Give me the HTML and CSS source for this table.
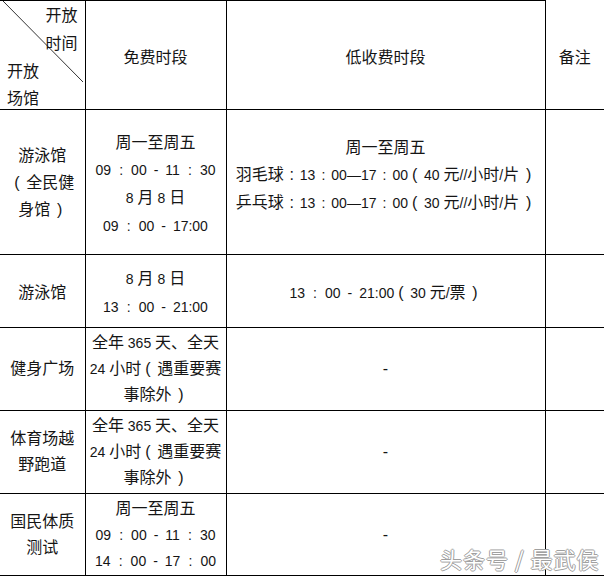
FILE: index.html
```html
<!DOCTYPE html>
<html lang="zh-CN">
<head>
<meta charset="utf-8">
<title>开放时段</title>
<link rel="stylesheet" href="styles.css">
</head>
<body>
<div class="page">
  <table class="sched">
    <colgroup><col class="c1"><col class="c2"><col class="c3"><col class="c4"></colgroup>
    <tr class="h-head">
      <td class="corner">
        <svg class="diag" width="85" height="109" viewBox="0 0 85 109"><line x1="3" y1="0" x2="83" y2="81" stroke="#333" stroke-width="1"/></svg>
        <div class="corner-top">开放<br>时间</div>
        <div class="corner-bot">开放<br>场馆</div>
      </td>
      <td class="lo">免费时段</td>
      <td class="lo">低收费时段</td>
      <td class="lo note-head">备注</td>
    </tr>
    <tr class="h-r1">
      <td>游泳馆<br><span class="po">(</span>全民健<br>身馆<span class="pc">)</span></td>
      <td class="lo">周一至周五<br><span class="d">09<span class="c cw">:</span>00&ensp;-&ensp;11<span class="c cw">:</span>30</span><br><span class="d">8 </span>月<span class="d"> 8 </span>日<br><span class="d">09<span class="c cw">:</span>00&ensp;-&ensp;17:00</span></td>
      <td class="low">周一至周五<br>羽毛球<span class="c">:</span><span class="d">13<span class="c">:</span>00—17<span class="c">:</span>00</span><span class="po">(</span><span class="d">40 </span>元<span class="d">//</span>小时<span class="d">/</span>片<span class="pc">)</span><br>乒乓球<span class="c">:</span><span class="d">13<span class="c">:</span>00—17<span class="c">:</span>00</span><span class="po">(</span><span class="d">30 </span>元<span class="d">//</span>小时<span class="d">/</span>片<span class="pc">)</span></td>
      <td></td>
    </tr>
    <tr class="h-r2 lo-row">
      <td>游泳馆</td>
      <td><span class="d">8 </span>月<span class="d"> 8 </span>日<br><span class="d">13<span class="c cw">:</span>00&ensp;-&ensp;21:00</span></td>
      <td><span class="d">13<span class="c cw">:</span>00&ensp;-&ensp;21:00</span><span class="po">(</span><span class="d">30 </span>元<span class="d">/</span>票<span class="pc">)</span></td>
      <td></td>
    </tr>
    <tr class="h-r3 tight">
      <td>健身广场</td>
      <td>全年<span class="d"> 365 </span>天、全天<br><span class="d">24 </span>小时<span class="po">(</span>遇重要赛<br>事除外<span class="pc">)</span></td>
      <td>-</td>
      <td></td>
    </tr>
    <tr class="h-r4 tight">
      <td>体育场越<br>野跑道</td>
      <td>全年<span class="d"> 365 </span>天、全天<br><span class="d">24 </span>小时<span class="po">(</span>遇重要赛<br>事除外<span class="pc">)</span></td>
      <td>-</td>
      <td></td>
    </tr>
    <tr class="h-r5 tight">
      <td>国民体质<br>测试</td>
      <td>周一至周五<br><span class="d">09<span class="c cw">:</span>00&ensp;-&ensp;11<span class="c cw">:</span>30</span><br><span class="d">14<span class="c cw">:</span>00&ensp;-&ensp;17<span class="c cw">:</span>00</span></td>
      <td>-</td>
      <td></td>
    </tr>
  </table>
  <div class="watermark">头条号 / 最武侯</div>
</div>
</body>
</html>
```
FILE: styles.css
```css
html, body {
  margin: 0;
  padding: 0;
  background: #fff;
}

body {
  font-family: "Liberation Sans", "Noto Sans CJK SC", sans-serif;
  font-size: 16px;
  color: #151515;
}

.page {
  position: relative;
  width: 604px;
  height: 577px;
  overflow: hidden;
}

.sched {
  border-collapse: collapse;
  table-layout: fixed;
  width: 604px;
}

.c1 { width: 85px; }
.c2 { width: 141px; }
.c3 { width: 319px; }
.c4 { width: 59px; }

.sched td {
  border: 1px solid #000;
  padding: 0;
  text-align: center;
  vertical-align: middle;
  line-height: 27px;
  white-space: nowrap;
}

.sched td:first-child { border-left: none; }
.sched td:last-child { border-right: none; }
.sched .note-head { border-top: none; }

.h-head { height: 109px; }
.h-r1 { height: 145px; }
.h-r2 { height: 73px; }
.h-r3 { height: 83px; }
.h-r4 { height: 83px; }
.h-r5 { height: 82px; }

.tight td { line-height: 26px; }

.sched .lo { padding-top: 5px; }
.lo-row td { padding-top: 3px; }

.d { font-size: 14px; }

.c {
  display: inline-block;
  width: 16px;
  text-align: center;
}

.cw { width: 20px; }

.po, .pc {
  display: inline-block;
  width: 12px;
}

.po { text-align: left; padding-left: 4px; }
.pc { text-align: right; padding-right: 4px; }

.sched .low { padding-bottom: 14px; }

.corner {
  position: relative;
}

.diag {
  position: absolute;
  left: 0;
  top: 0;
}

.corner-top {
  position: absolute;
  top: 1px;
  right: 7px;
  line-height: 28px;
}

.corner-bot {
  position: absolute;
  top: 57px;
  left: 7px;
  line-height: 27px;
}

.watermark {
  position: absolute;
  left: 440px;
  top: 545px;
  font-family: "Noto Sans CJK SC", sans-serif;
  font-size: 22px;
  line-height: 26px;
  letter-spacing: 1px;
  color: #fff;
  text-shadow: 1px 0 #a0a0a0, -1px 0 #a0a0a0, 0 1px #a0a0a0, 0 -1px #a0a0a0;
  white-space: nowrap;
}
```
